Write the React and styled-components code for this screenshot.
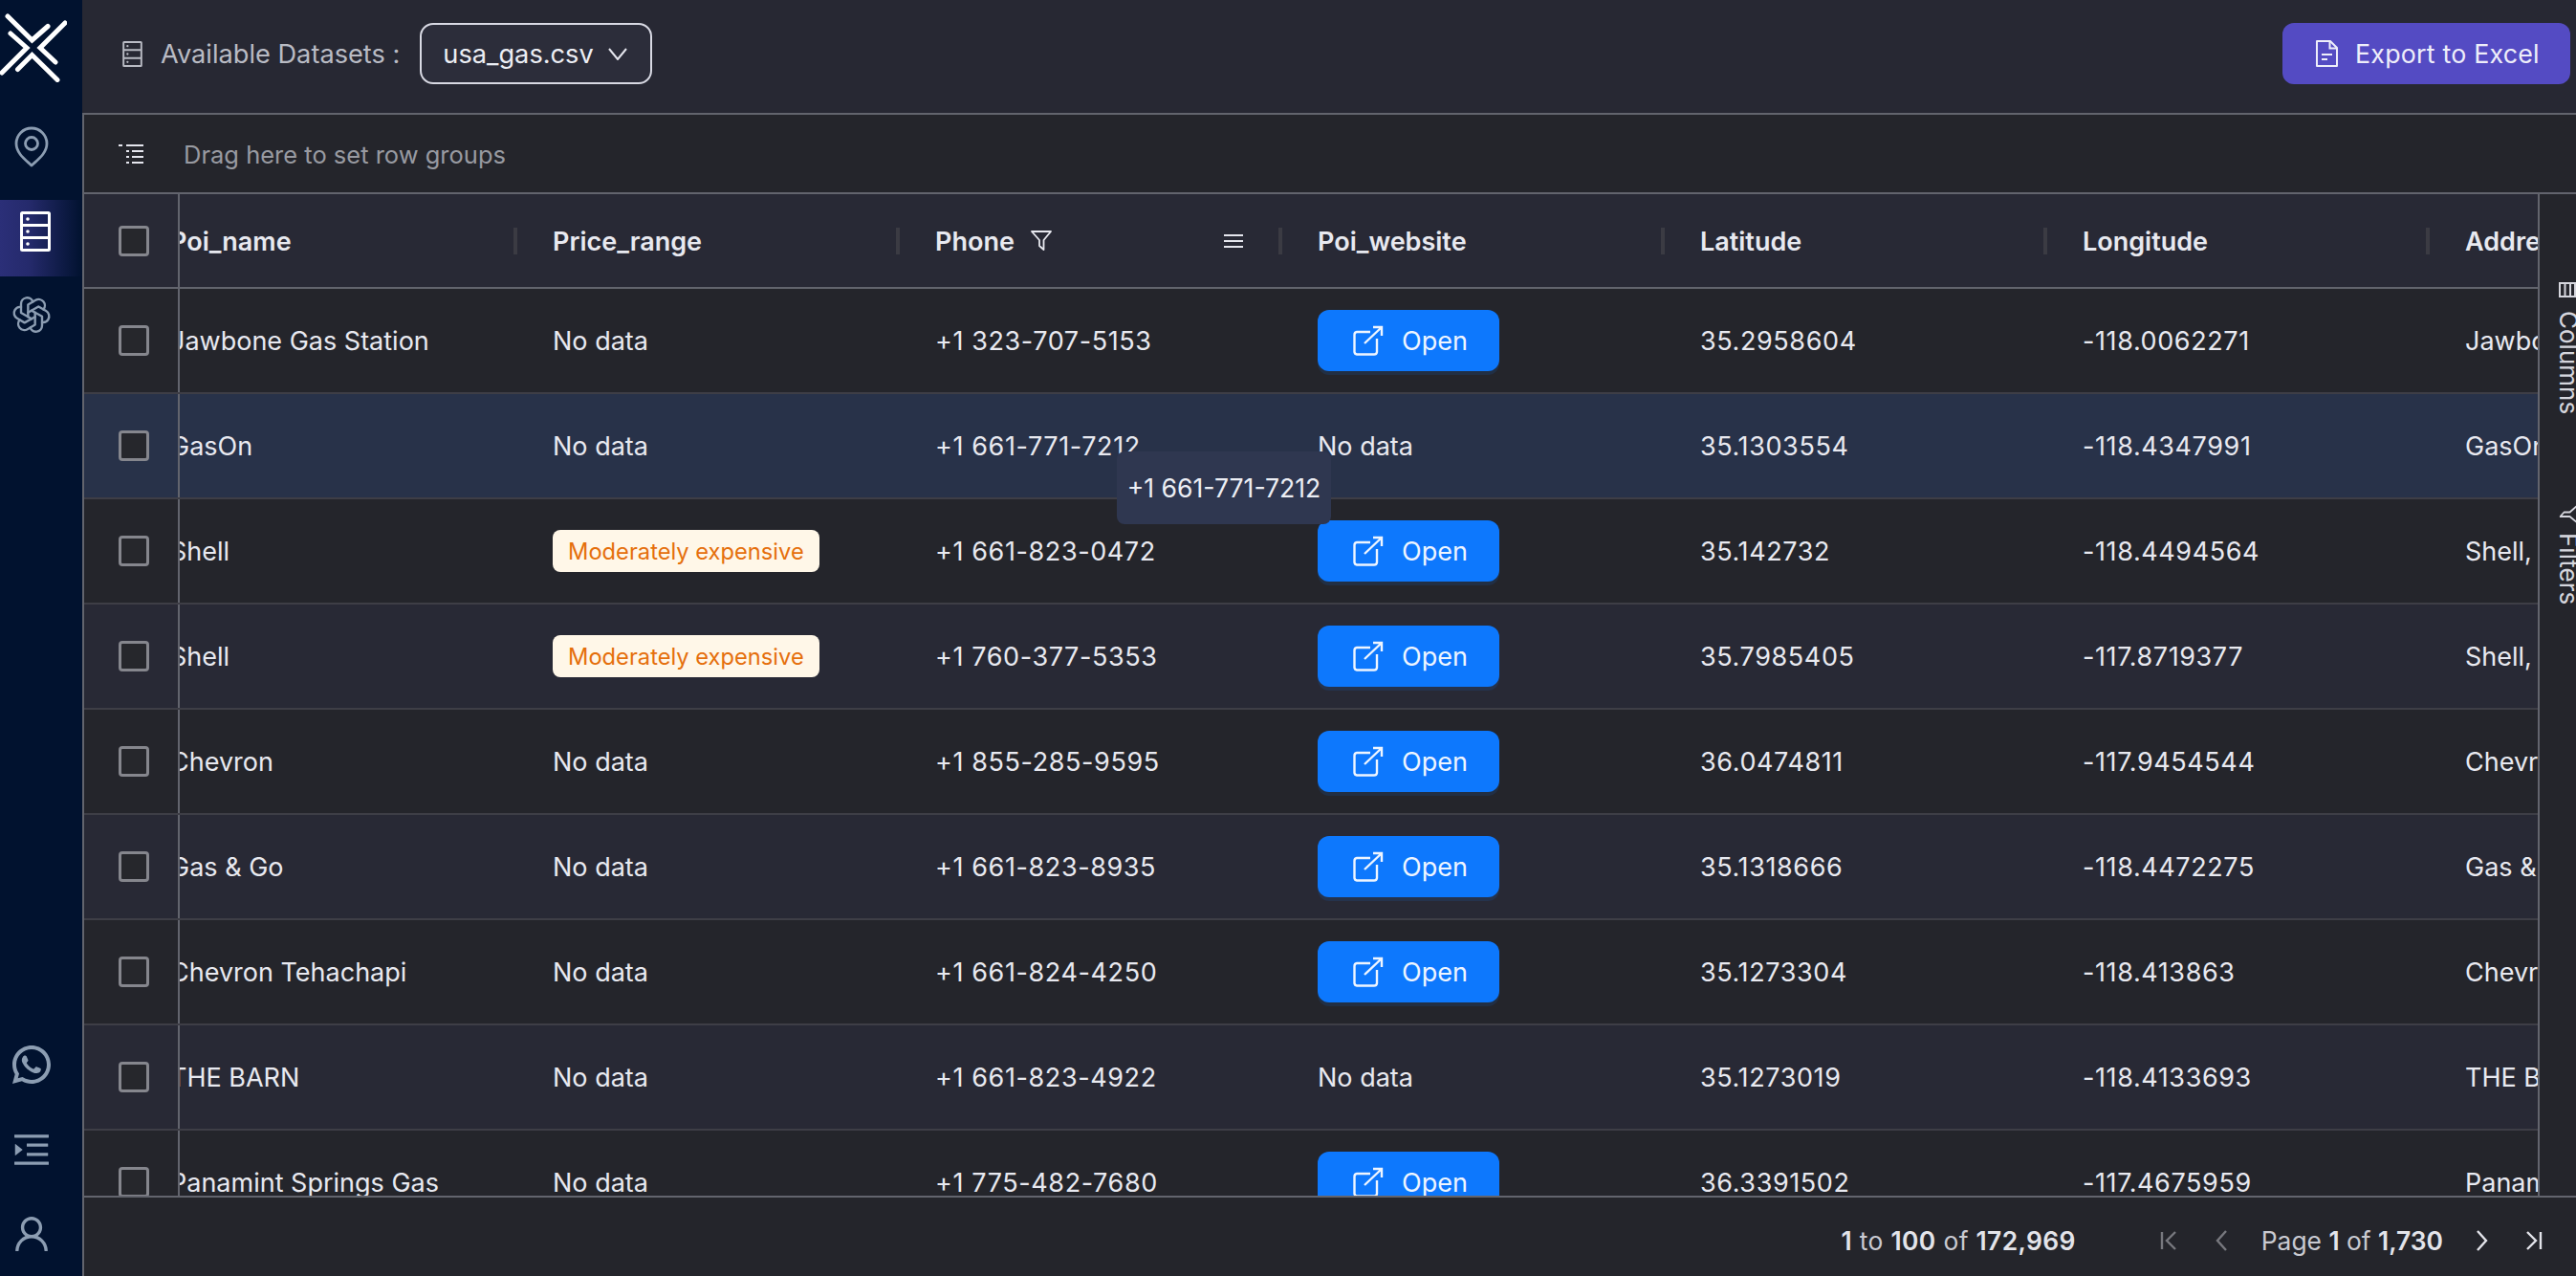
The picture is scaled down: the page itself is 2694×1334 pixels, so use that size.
import React from "react";
import styled, { createGlobalStyle } from "styled-components";
import { TbBrandOpenai } from "react-icons/tb";
import { RiWhatsappLine } from "react-icons/ri";
import { AiOutlineMenuUnfold, AiOutlineUser } from "react-icons/ai";

const GlobalStyle = createGlobalStyle`
  html, body {
    margin: 0;
    padding: 0;
    background: #24252b;
    overflow: hidden;
  }
  * {
    box-sizing: border-box;
  }
`;

const Page = styled.div`
  display: flex;
  width: 2694px;
  height: 1334px;
  font-family: Inter, "Liberation Sans", sans-serif;
  color: #e8e9f0;
`;

const Sidebar = styled.aside`
  display: flex;
  flex-direction: column;
  flex: 0 0 86px;
  background: #01122f;
`;

const LogoSlot = styled.div`
  height: 113px;
  padding-top: 14px;
`;

const NavItem = styled.div`
  display: flex;
  align-items: center;
  height: ${(p) => p.$height || 80}px;
  padding-bottom: ${(p) => (p.$active ? 14 : 0)}px;
  margin-top: ${(p) => (p.$active ? 16 : 0)}px;
  background: ${(p) =>
    p.$active ? "linear-gradient(90deg, #2b2f78 0%, #252a6c 35%, #01122f 100%)" : "none"};
  color: #8c9db2;
`;

const NavIcon = styled.div`
  display: flex;
  justify-content: center;
  width: ${(p) => (p.$active ? 74 : 66)}px;
`;

const BottomNav = styled.div`
  margin-top: auto;
`;

const Main = styled.main`
  display: flex;
  flex-direction: column;
  flex: 1;
  min-width: 0;
`;

const TopBar = styled.header`
  display: flex;
  align-items: center;
  flex: 0 0 118px;
  padding: 0 6px 6px 42px;
  background: #272833;
`;

const DatasetLabel = styled.span`
  margin-left: 19px;
  font-size: 27.2px;
  color: #b9bbc4;
`;

const DatasetSelect = styled.div`
  display: flex;
  align-items: center;
  justify-content: space-between;
  width: 243px;
  height: 64px;
  margin-left: 21px;
  padding: 0 24px 0 22px;
  border: 2px solid #d8d9e3;
  border-radius: 14px;
  background: #2c2d3a;
  font-size: 27.2px;
  color: #eceef4;
`;

const ExportButton = styled.button`
  display: flex;
  align-items: center;
  gap: 18px;
  height: 64px;
  width: 301px;
  margin-left: auto;
  padding: 0 0 0 35px;
  border: 0;
  border-radius: 12px;
  background: #544bc3;
  font-family: inherit;
  font-size: 26.8px;
  letter-spacing: 0.2px;
  color: #eeeefa;
`;

const GridShell = styled.section`
  display: flex;
  flex-direction: column;
  flex: 1;
  min-height: 0;
  border-top: 2px solid #62646d;
  border-left: 2px solid #62646d;
  background: #24252b;
`;

const GroupBar = styled.div`
  display: flex;
  align-items: center;
  flex: 0 0 83px;
  padding-left: 36px;
  border-bottom: 2px solid #62646d;
  font-size: 25.5px;
  color: #989aa1;
`;

const GroupLabel = styled.span`
  margin: 2px 0 0 42px;
`;

const GridBody = styled.div`
  display: flex;
  flex: 0 0 1047px;
  min-height: 0;
`;

const TableArea = styled.div`
  position: relative;
  flex: 1;
  min-width: 0;
  overflow: hidden;
`;

const HeaderRow = styled.div`
  display: flex;
  height: 99px;
  border-bottom: 2px solid #62646d;
  background: #282935;
  font-size: 27px;
  font-weight: 600;
  color: #e8e9f0;
`;

const Row = styled.div`
  display: flex;
  height: 110px;
  border-bottom: 2px solid #3e3e46;
  background: ${(p) => (p.$hover ? "#283249" : p.$even ? "#282935" : "#24252b")};
  font-size: 27px;
`;

const PinnedCell = styled.div`
  display: flex;
  align-items: center;
  flex: 0 0 100px;
  padding-left: 36px;
  border-right: 2px solid #62646d;
`;

const Checkbox = styled.span`
  display: block;
  width: 32px;
  height: 32px;
  border: 3px solid #85868d;
  border-radius: 4px;
  background: #26272c;
`;

const Scroller = styled.div`
  flex: 1;
  min-width: 0;
  overflow: hidden;
`;

const Columns = styled.div`
  display: flex;
  height: 100%;
  margin-left: -47px;
`;

const HeaderCell = styled.div`
  display: flex;
  align-items: center;
  flex: 0 0 400px;
  padding-left: 37px;
`;

const HeaderLabel = styled.span`
  margin-top: 2px;
`;

const FilterMark = styled.span`
  display: flex;
  margin-left: 17px;
`;

const HeaderMenu = styled.span`
  display: flex;
  margin-left: auto;
  margin-right: 37px;
`;

const Resizer = styled.span`
  flex: 0 0 4px;
  height: 28px;
  margin-left: ${(p) => (p.$push ? "auto" : 0)};
  background: #3b3b43;
`;

const Cell = styled.div`
  display: flex;
  align-items: center;
  flex: 0 0 400px;
  padding-left: 37px;
  white-space: nowrap;
  letter-spacing: ${(p) => (p.$num ? "0.6px" : "normal")};
`;

const PriceTag = styled.span`
  display: flex;
  align-items: center;
  height: 44px;
  padding: 0 16px;
  border-radius: 8px;
  background: #fff7e8;
  font-size: 23.7px;
  color: #e56f0c;
`;

const OpenButton = styled.button`
  display: flex;
  align-items: center;
  gap: 19px;
  width: 190px;
  height: 64px;
  padding-left: 37px;
  border: 0;
  border-radius: 12px;
  background: #0d78fd;
  box-shadow: 0 4px 0 rgba(13, 120, 253, 0.12);
  font-family: inherit;
  font-size: 27px;
  color: #eef5ff;
`;

const Tooltip = styled.div`
  position: absolute;
  left: 1080px;
  top: 269px;
  display: flex;
  align-items: center;
  justify-content: center;
  width: 224px;
  height: 76px;
  border-radius: 8px;
  background: #2f3750;
  font-size: 26.6px;
  color: #eceef4;
`;

const SidePanel = styled.div`
  flex: 0 0 40px;
  padding: 92px 0 0 20px;
  border-left: 2px solid #62646d;
  overflow: hidden;
`;

const SideTab = styled.div`
  display: flex;
  flex-direction: column;
  align-items: flex-start;
  gap: ${(p) => p.$gap}px;
  width: 60px;
  margin-top: ${(p) => p.$offset || 0}px;
  color: #d5d6dd;
`;

const TurnedIcon = styled.span`
  display: flex;
  transform: rotate(90deg);
`;

const SideLabel = styled.span`
  margin-left: -6px;
  writing-mode: vertical-rl;
  font-size: 26px;
  line-height: 32px;
`;

const Footer = styled.footer`
  display: flex;
  align-items: center;
  justify-content: flex-end;
  flex: 1;
  padding: 7px 34px 0 0;
  border-top: 2px solid #62646d;
  font-size: 26.4px;
  color: #c9cad1;
`;

const RowCount = styled.span`
  letter-spacing: 0.37px;
`;

const Strong = styled.b`
  font-weight: 600;
  color: #e3e4ea;
`;

const PageNav = styled.div`
  display: flex;
  align-items: center;
  margin-left: 87px;
`;

const PageButton = styled.span`
  display: flex;
  margin-right: ${(p) => p.$after || 0}px;
  color: ${(p) => (p.$off ? "#77787e" : "#e3e4ea")};
`;

const PageText = styled.span`
  margin-right: 30px;
`;

const Logo = () => (
  <svg width="70" height="72" viewBox="0 14 70 72" fill="none" stroke="#fff" strokeWidth="5" strokeLinecap="round" strokeLinejoin="miter">
    <path d="M8 17 L33.5 42 L50 27.5" />
    <path d="M68 24 L42 50 L58 65" />
    <path d="M18.5 72.5 L33.5 57.5 L60 83.5" />
    <path d="M2 76 L28 50 L11 35" />
  </svg>
);

const PinIcon = () => (
  <svg width="36" height="43" viewBox="0 0 36 43" fill="none" stroke="currentColor" strokeWidth="2.8">
    <path d="M18 41 C13 36 2 29 2 18 A16 16 0 0 1 34 18 C34 29 23 36 18 41 Z" strokeLinejoin="round" />
    <circle cx="18" cy="18" r="6.5" />
  </svg>
);

const DatabaseIcon = ({ width, height, stroke, color }) => (
  <svg width={width} height={height} viewBox="0 0 32 42" fill="none" stroke={color} strokeWidth={stroke}>
    <rect x="1.5" y="1.5" width="29" height="39" rx="1" />
    <path d="M1.5 14.5 H30.5 M1.5 27.5 H30.5" />
    <circle cx="8" cy="8" r="1.8" fill={color} stroke="none" />
    <circle cx="8" cy="21" r="1.8" fill={color} stroke="none" />
    <circle cx="8" cy="34" r="1.8" fill={color} stroke="none" />
  </svg>
);

const Chevron = () => (
  <svg width="20" height="13" viewBox="0 0 20 13" fill="none" stroke="#e5e6ee" strokeWidth="2">
    <path d="M1 1 L10 12 L19 1" />
  </svg>
);

const FileIcon = () => (
  <svg width="23" height="28" viewBox="0 0 23 28" fill="none" stroke="#eeeefa" strokeWidth="2">
    <path d="M1 1 H15 L22 8 V27 H1 Z" strokeLinejoin="round" />
    <path d="M14.5 1 V8.5 H22 M6 15 H17 M6 20 H12" />
  </svg>
);

const GroupIcon = () => (
  <svg width="26" height="20" viewBox="0 0 26 20" fill="#e5e6ee">
    <rect x="0" y="0" width="4" height="2" />
    <rect x="8" y="0" width="18" height="2" />
    <rect x="8" y="6" width="3" height="2" />
    <rect x="14" y="6" width="12" height="2" />
    <rect x="8" y="12" width="3" height="2" />
    <rect x="14" y="12" width="12" height="2" />
    <rect x="8" y="18" width="3" height="2" />
    <rect x="14" y="18" width="12" height="2" />
  </svg>
);

const FilterIcon = () => (
  <svg width="22" height="21" viewBox="0 0 22 21" fill="none" stroke="currentColor" strokeWidth="1.8" strokeLinejoin="round">
    <path d="M1 1 H21 L13.5 10 V20 L9 16 V10 Z" />
  </svg>
);

const MenuIcon = () => (
  <svg width="20" height="14" viewBox="0 0 20 14" fill="#e5e6ee">
    <rect y="0" width="20" height="2" />
    <rect y="6" width="20" height="2" />
    <rect y="12" width="20" height="2" />
  </svg>
);

const ExternalIcon = () => (
  <svg width="32" height="32" viewBox="0 0 32 32" fill="none" stroke="#eef5ff" strokeWidth="2.4">
    <path d="M18 7 H4 A3 3 0 0 0 1.5 10 V28 A3 3 0 0 0 4 30.5 H22 A3 3 0 0 0 25 28 V14" />
    <path d="M12 19 L30 2 M21 2 H30 V11" />
  </svg>
);

const ColumnsIcon = () => (
  <svg width="18" height="16" viewBox="0 0 18 16" fill="none" stroke="currentColor" strokeWidth="2">
    <rect x="1" y="1" width="16" height="14" />
    <path d="M6.5 1 V15 M12 1 V15" />
  </svg>
);

const PageArrow = ({ d, bar }) => (
  <svg width="20" height="24" viewBox="0 0 20 24" fill="none" stroke="currentColor" strokeWidth="2.4">
    <path d={d} />
    {bar && <path d={bar} />}
  </svg>
);

const rows = [
  ["Jawbone Gas Station", "", "+1 323-707-5153", true, "35.2958604", "-118.0062271", "Jawbone Gas Station"],
  ["GasOn", "", "+1 661-771-7212", false, "35.1303554", "-118.4347991", "GasOn"],
  ["Shell", "Moderately expensive", "+1 661-823-0472", true, "35.142732", "-118.4494564", "Shell, California"],
  ["Shell", "Moderately expensive", "+1 760-377-5353", true, "35.7985405", "-117.8719377", "Shell, California"],
  ["Chevron", "", "+1 855-285-9595", true, "36.0474811", "-117.9454544", "Chevron"],
  ["Gas & Go", "", "+1 661-823-8935", true, "35.1318666", "-118.4472275", "Gas & Go"],
  ["Chevron Tehachapi", "", "+1 661-824-4250", true, "35.1273304", "-118.413863", "Chevron Tehachapi"],
  ["THE BARN", "", "+1 661-823-4922", false, "35.1273019", "-118.4133693", "THE BARN"],
  ["Panamint Springs Gas", "", "+1 775-482-7680", true, "36.3391502", "-117.4675959", "Panamint Springs Gas"],
];

const headers = ["Poi_name", "Price_range", "Phone", "Poi_website", "Latitude", "Longitude", "Address"];

const App = () => (
  <Page>
    <GlobalStyle />
    <Sidebar>
      <LogoSlot>
        <Logo />
      </LogoSlot>
      <NavItem>
        <NavIcon>
          <PinIcon />
        </NavIcon>
      </NavItem>
      <NavItem $active>
        <NavIcon $active>
          <DatabaseIcon width={32} height={42} stroke={3} color="#fff" />
        </NavIcon>
      </NavItem>
      <NavItem>
        <NavIcon>
          <TbBrandOpenai size={44} strokeWidth={1.3} />
        </NavIcon>
      </NavItem>
      <BottomNav>
        <NavItem $height={89}>
          <NavIcon>
            <RiWhatsappLine size={48} />
          </NavIcon>
        </NavItem>
        <NavItem $height={89}>
          <NavIcon>
            <AiOutlineMenuUnfold size={46} />
          </NavIcon>
        </NavItem>
        <NavItem $height={88}>
          <NavIcon>
            <AiOutlineUser size={46} />
          </NavIcon>
        </NavItem>
      </BottomNav>
    </Sidebar>
    <Main>
      <TopBar>
        <DatabaseIcon width={21} height={27} stroke={3} color="#b9bbc4" />
        <DatasetLabel>Available Datasets :</DatasetLabel>
        <DatasetSelect>
          usa_gas.csv
          <Chevron />
        </DatasetSelect>
        <ExportButton>
          <FileIcon />
          Export to Excel
        </ExportButton>
      </TopBar>
      <GridShell>
        <GroupBar>
          <GroupIcon />
          <GroupLabel>Drag here to set row groups</GroupLabel>
        </GroupBar>
        <GridBody>
          <TableArea>
            <HeaderRow>
              <PinnedCell>
                <Checkbox />
              </PinnedCell>
              <Scroller>
                <Columns>
                  {headers.map((name) => (
                    <HeaderCell key={name}>
                      <HeaderLabel>{name}</HeaderLabel>
                      {name === "Phone" && (
                        <FilterMark>
                          <FilterIcon />
                        </FilterMark>
                      )}
                      {name === "Phone" && (
                        <HeaderMenu>
                          <MenuIcon />
                        </HeaderMenu>
                      )}
                      {name !== "Address" && <Resizer $push={name !== "Phone"} />}
                    </HeaderCell>
                  ))}
                </Columns>
              </Scroller>
            </HeaderRow>
            {rows.map((row, index) => (
              <Row key={index} $even={index % 2 === 1} $hover={index === 1}>
                <PinnedCell>
                  <Checkbox />
                </PinnedCell>
                <Scroller>
                  <Columns>
                    <Cell>{row[0]}</Cell>
                    <Cell>{row[1] ? <PriceTag>{row[1]}</PriceTag> : "No data"}</Cell>
                    <Cell $num>{row[2]}</Cell>
                    <Cell>
                      {row[3] ? (
                        <OpenButton>
                          <ExternalIcon />
                          Open
                        </OpenButton>
                      ) : (
                        "No data"
                      )}
                    </Cell>
                    <Cell $num>{row[4]}</Cell>
                    <Cell $num>{row[5]}</Cell>
                    <Cell>{row[6]}</Cell>
                  </Columns>
                </Scroller>
              </Row>
            ))}
            <Tooltip>+1 661-771-7212</Tooltip>
          </TableArea>
          <SidePanel>
            <SideTab $gap={14}>
              <ColumnsIcon />
              <SideLabel>Columns</SideLabel>
            </SideTab>
            <SideTab $offset={94} $gap={9}>
              <TurnedIcon>
                <FilterIcon />
              </TurnedIcon>
              <SideLabel>Filters</SideLabel>
            </SideTab>
          </SidePanel>
        </GridBody>
        <Footer>
          <RowCount>
            <Strong>1</Strong> to <Strong>100</Strong> of <Strong>172,969</Strong>
          </RowCount>
          <PageNav>
            <PageButton $off $after={36}>
              <PageArrow d="M17 3 L8 12 L17 21" bar="M3 3 V21" />
            </PageButton>
            <PageButton $off $after={31}>
              <PageArrow d="M14 2 L5 12 L14 22" />
            </PageButton>
            <PageText>
              Page <Strong>1</Strong> of <Strong>1,730</Strong>
            </PageText>
            <PageButton $after={35}>
              <PageArrow d="M6 2 L15 12 L6 22" />
            </PageButton>
            <PageButton>
              <PageArrow d="M3 3 L12 12 L3 21" bar="M17 3 V21" />
            </PageButton>
          </PageNav>
        </Footer>
      </GridShell>
    </Main>
  </Page>
);

export default App;
